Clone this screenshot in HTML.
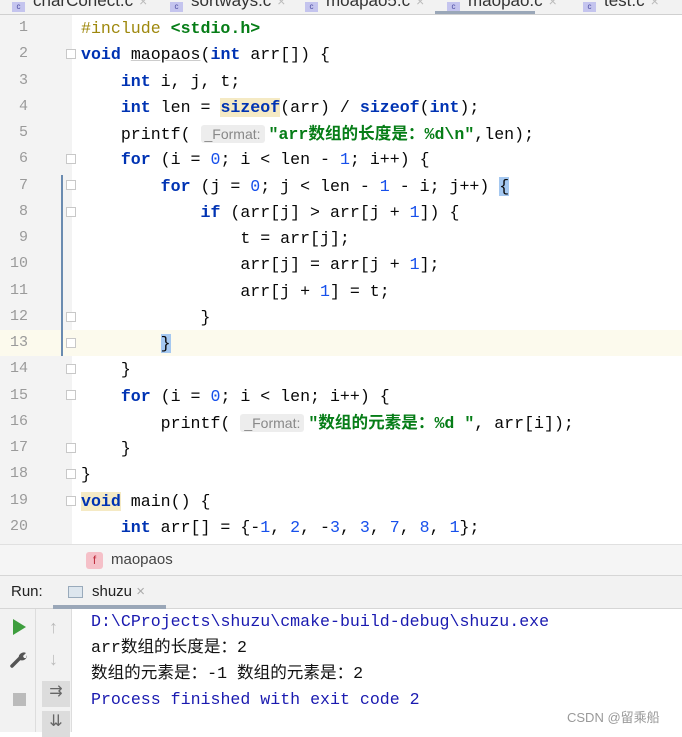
<!DOCTYPE html>
<html><head><meta charset="utf-8"><style>
*{margin:0;padding:0;box-sizing:border-box}
body{width:682px;height:732px;overflow:hidden;background:#fff;font-family:"Liberation Sans","Noto Sans CJK SC",sans-serif;position:relative}
.tabs{position:absolute;left:0;top:0;width:682px;height:15px;background:#f2f2f2;border-bottom:1px solid #d0d0d0;overflow:hidden}
.tab{position:absolute;top:-9px;font-size:17px;color:#333;white-space:nowrap}
.tab i{display:inline-block;width:13px;height:10px;background:#c4c4ee;color:#4a4aa0;font-size:8px;font-style:normal;margin-right:8px;vertical-align:-3px;text-align:center;line-height:10px}
.tab b{font-weight:normal;color:#bbb;font-size:14px;margin-left:6px}
.gut{position:absolute;left:0;top:15px;width:72px;height:529px;background:#f3f3f3}
.ed{position:absolute;left:0;top:15px;width:682px;height:529px;overflow:hidden}
.ln{position:absolute;left:0;width:682px;height:26.26px;line-height:26.26px;font-family:"Liberation Mono","Noto Sans CJK SC",monospace;font-size:16.6px;white-space:pre;color:#080808}
.ln .n{position:absolute;left:0;width:28px;text-align:right;color:#9a9a9a;font-size:15px}
.ln .c{position:absolute;left:81px;top:1px}
.k{color:#0033b3;font-weight:bold}
.s{color:#067d17;font-weight:bold}
.d{color:#1750eb}
.p{color:#9e880d}
.h{background:#f5eac4}
.hint{font-family:"Liberation Sans",sans-serif;font-size:14px;color:#888;background:#ededed;border-radius:3px;padding:1px 4px;margin-right:4px}
.bm{background:#a5c8f0}
.fold{position:absolute;left:66px;width:10px;height:10px;border:1px solid #c8c8c8;background:#fff}
.bread{position:absolute;left:0;top:544px;width:682px;height:32px;background:#f5f5f5;border-top:1px solid #e0e0e0;border-bottom:1px solid #d6d6d6}
.run{position:absolute;left:0;top:576px;width:682px;height:33px;background:#f2f2f2;border-bottom:1px solid #d6d6d6;font-size:15px;color:#222}
.con{position:absolute;left:0;top:609px;width:682px;height:123px;background:#fff}
.side1{position:absolute;left:0;top:609px;width:36px;height:123px;background:#f2f2f2;border-right:1px solid #ddd}
.side2{position:absolute;left:36px;top:609px;width:36px;height:123px;background:#f2f2f2;border-right:1px solid #ddd}
.cl{position:absolute;left:91px;height:20px;line-height:20px;font-family:"Liberation Mono","Noto Sans CJK SC",monospace;font-size:16.6px;white-space:pre;color:#111}
</style></head><body>
<div class="tabs">
<span class="tab" style="left:12px"><i>c</i>charConect.c<b>×</b></span>
<span class="tab" style="left:170px"><i>c</i>sortways.c<b>×</b></span>
<span class="tab" style="left:305px"><i>c</i>moapao5.c<b>×</b></span>
<span class="tab" style="left:447px"><i>c</i>maopao.c<b>×</b></span>
<span class="tab" style="left:583px"><i>c</i>test.c<b>×</b></span>
<div style="position:absolute;left:435px;top:11px;width:100px;height:4px;background:#9aa7b8"></div>
</div>
<div class="gut"></div>
<div class="ed">
<div style="position:absolute;left:0;top:315.1px;width:682px;height:26.3px;background:#fcfaed"></div>
<div style="position:absolute;left:61px;top:160px;width:2px;height:181px;background:#6a8bb0"></div>
<div class="ln" style="top:0"><span class="n">1</span><span class="c"><span class="p">#include</span> <span class="s">&lt;stdio.h&gt;</span></span></div>
<div class="ln" style="top:26.26px"><span class="n">2</span><span class="c"><span class="k">void</span> <u style="text-decoration-color:#ccc">maopaos</u>(<span class="k">int</span> arr[]) {</span></div>
<div class="ln" style="top:52.5px"><span class="n">3</span><span class="c">    <span class="k">int</span> i, j, t;</span></div>
<div class="ln" style="top:78.8px"><span class="n">4</span><span class="c">    <span class="k">int</span> len = <span class="k h">sizeof</span>(arr) / <span class="k">sizeof</span>(<span class="k">int</span>);</span></div>
<div class="ln" style="top:105px"><span class="n">5</span><span class="c">    printf( <span class="hint">_Format:</span><span class="s">"arr数组的长度是：%d\n"</span>,len);</span></div>
<div class="ln" style="top:131.3px"><span class="n">6</span><span class="c">    <span class="k">for</span> (i = <span class="d">0</span>; i &lt; len - <span class="d">1</span>; i++) {</span></div>
<div class="ln" style="top:157.6px"><span class="n">7</span><span class="c">        <span class="k">for</span> (j = <span class="d">0</span>; j &lt; len - <span class="d">1</span> - i; j++) <span class="bm">{</span></span></div>
<div class="ln" style="top:183.8px"><span class="n">8</span><span class="c">            <span class="k">if</span> (arr[j] &gt; arr[j + <span class="d">1</span>]) {</span></div>
<div class="ln" style="top:210.1px"><span class="n">9</span><span class="c">                t = arr[j];</span></div>
<div class="ln" style="top:236.3px"><span class="n">10</span><span class="c">                arr[j] = arr[j + <span class="d">1</span>];</span></div>
<div class="ln" style="top:262.6px"><span class="n">11</span><span class="c">                arr[j + <span class="d">1</span>] = t;</span></div>
<div class="ln" style="top:288.9px"><span class="n">12</span><span class="c">            }</span></div>
<div class="ln" style="top:315.1px"><span class="n">13</span><span class="c">        <span class="bm">}</span></span></div>
<div class="ln" style="top:341.4px"><span class="n">14</span><span class="c">    }</span></div>
<div class="ln" style="top:367.6px"><span class="n">15</span><span class="c">    <span class="k">for</span> (i = <span class="d">0</span>; i &lt; len; i++) {</span></div>
<div class="ln" style="top:393.9px"><span class="n">16</span><span class="c">        printf( <span class="hint">_Format:</span><span class="s">"数组的元素是：%d "</span>, arr[i]);</span></div>
<div class="ln" style="top:420.2px"><span class="n">17</span><span class="c">    }</span></div>
<div class="ln" style="top:446.4px"><span class="n">18</span><span class="c">}</span></div>
<div class="ln" style="top:472.7px"><span class="n">19</span><span class="c"><span class="k h">void</span> main() {</span></div>
<div class="ln" style="top:498.9px"><span class="n">20</span><span class="c">    <span class="k">int</span> arr[] = {-<span class="d">1</span>, <span class="d">2</span>, -<span class="d">3</span>, <span class="d">3</span>, <span class="d">7</span>, <span class="d">8</span>, <span class="d">1</span>};</span></div>
<div class="fold" style="top:34px"></div><div class="fold" style="top:139px"></div><div class="fold" style="top:165px"></div><div class="fold" style="top:192px"></div>
<div class="fold" style="top:297px"></div><div class="fold" style="top:323px"></div><div class="fold" style="top:349px"></div><div class="fold" style="top:375px"></div>
<div class="fold" style="top:428px"></div><div class="fold" style="top:454px"></div><div class="fold" style="top:481px"></div>
</div>
<div class="bread"><span style="position:absolute;left:86px;top:7px;width:17px;height:17px;background:#f5c0c8;border-radius:3px;color:#c03040;font-size:12px;text-align:center;line-height:17px">f</span><span style="position:absolute;left:111px;top:6px;font-size:15px;color:#444">maopaos</span></div>
<div class="run"><span style="position:absolute;left:11px;top:7px">Run:</span>
<span style="position:absolute;left:68px;top:10px;width:15px;height:12px;border:1px solid #9ab;background:#dde6ee"></span>
<span style="position:absolute;left:92px;top:7px">shuzu <span style="color:#aaa">×</span></span>
<div style="position:absolute;left:53px;top:29px;width:113px;height:4px;background:#9aa7b8"></div></div>
<div class="con"></div>
<div class="side1">
<div style="position:absolute;left:13px;top:10px;width:0;height:0;border-left:13px solid #3e9e3e;border-top:8px solid transparent;border-bottom:8px solid transparent"></div>
<svg style="position:absolute;left:10px;top:41px" width="18" height="18" viewBox="0 0 18 18"><path d="M2 16 L10 8" stroke="#555" stroke-width="3.5" stroke-linecap="round"/><path d="M9 9 A5 5 0 0 1 16 3 L13 6 L14 8 L16 8 L17 5 A5 5 0 0 1 10 10 Z" fill="#555"/></svg>
<div style="position:absolute;left:13px;top:84px;width:13px;height:13px;background:#bbb"></div>
</div>
<div class="side2">
<div style="position:absolute;left:13px;top:8px;color:#bbb;font-size:18px">↑</div>
<div style="position:absolute;left:13px;top:40px;color:#bbb;font-size:18px">↓</div>
<div style="position:absolute;left:6px;top:72px;width:28px;height:26px;background:#dcdcdc;color:#666;text-align:center;font-size:16px">⇉</div>
<div style="position:absolute;left:6px;top:102px;width:28px;height:26px;background:#dcdcdc;color:#666;text-align:center;font-size:16px">⇊</div>
</div>
<div class="cl" style="top:612px;color:#1a1ab0">D:\CProjects\shuzu\cmake-build-debug\shuzu.exe</div>
<div class="cl" style="top:638px">arr数组的长度是：2</div>
<div class="cl" style="top:664px">数组的元素是：-1 数组的元素是：2</div>
<div class="cl" style="top:690px;color:#1a1ab0">Process finished with exit code 2</div>
<div style="position:absolute;left:567px;top:707px;font-size:13px;color:#999">CSDN @留乘船</div>
</body></html>
